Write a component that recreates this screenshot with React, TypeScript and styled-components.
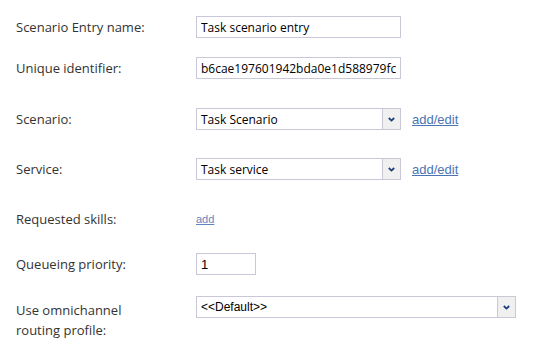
import styled, { createGlobalStyle } from "styled-components";

const GlobalStyle = createGlobalStyle`
    body {
        margin: 0;
        background: #fff;
        font-family: "Open Sans", "Noto Sans", sans-serif;
    }
`;

const Form = styled.div`
    padding: 16px 0 0 16px;
    width: 553px;
    height: 347px;
    box-sizing: border-box;
`;

const Row = styled.div<{ $top?: number; $start?: boolean }>`
    display: grid;
    grid-template-columns: 180px auto;
    align-items: ${(p) => (p.$start ? "start" : "center")};
    min-height: 22px;
    margin-top: ${(p) => p.$top ?? 0}px;
`;

const Label = styled.div<{ $pad?: number }>`
    font-size: 13px;
    line-height: 20px;
    color: #333;
    padding-top: ${(p) => p.$pad ?? 0}px;
`;

const Field = styled.div`
    display: flex;
    align-items: center;
    gap: 11px;
`;

const TextInput = styled.input<{ $w: number; $arial?: boolean }>`
    width: ${(p) => p.$w}px;
    height: 22px;
    box-sizing: border-box;
    border: 1px solid #c8c8d8;
    padding: 0 4px;
    margin: 0;
    font-family: ${(p) => (p.$arial ? '"Liberation Sans", Arial, sans-serif' : '"Open Sans", sans-serif')};
    font-size: ${(p) => (p.$arial ? 13 : 12)}px;
    color: #000;
    outline: none;
    background: #fff;
`;

const Select = styled.div<{ $w: number; $arial?: boolean }>`
    width: ${(p) => p.$w}px;
    height: 22px;
    box-sizing: border-box;
    border: 1px solid #c8c8d8;
    display: flex;
    align-items: center;
    background: #fff;
    font-family: ${(p) => (p.$arial ? '"Liberation Sans", Arial, sans-serif' : '"Open Sans", sans-serif')};
    font-size: 12px;
    color: #000;
`;

const SelectText = styled.span`
    flex: 1;
    padding-left: 4px;
    white-space: nowrap;
    overflow: hidden;
`;

const ArrowButton = styled.div`
    width: 17px;
    height: 100%;
    border-left: 1px solid #c8c8d8;
    background: #f0f0f0;
    display: flex;
    align-items: center;
    justify-content: center;
`;

const Link = styled.a<{ $size: number; $light?: boolean }>`
    font-family: "Liberation Sans", Arial, sans-serif;
    font-size: ${(p) => p.$size}px;
    color: ${(p) => (p.$light ? "#5f86c0" : "#4a74b3")};
    text-decoration: underline;
    cursor: pointer;
`;

function Chevron() {
    return (
        <svg width="7" height="5" viewBox="0 0 7 5">
            <path d="M0.8 1 L3.5 3.6 L6.2 1" fill="none" stroke="#1f3d7a" strokeWidth="1.8" />
        </svg>
    );
}

function Dropdown({ value, width, arial }: { value: string; width: number; arial?: boolean }) {
    return (
        <Select $w={width} $arial={arial}>
            <SelectText>{value}</SelectText>
            <ArrowButton>
                <Chevron />
            </ArrowButton>
        </Select>
    );
}

export default function App() {
    return (
        <>
            <GlobalStyle />
            <Form>
                <Row>
                    <Label>Scenario Entry name:</Label>
                    <Field>
                        <TextInput $w={205} value="Task scenario entry" readOnly />
                    </Field>
                </Row>
                <Row $top={19}>
                    <Label>Unique identifier:</Label>
                    <Field>
                        <TextInput $w={205} value="b6cae197601942bda0e1d588979fca4e" readOnly />
                    </Field>
                </Row>
                <Row $top={29}>
                    <Label>Scenario:</Label>
                    <Field>
                        <Dropdown value="Task Scenario" width={205} />
                        <Link $size={13}>add/edit</Link>
                    </Field>
                </Row>
                <Row $top={28}>
                    <Label>Service:</Label>
                    <Field>
                        <Dropdown value="Task service" width={205} />
                        <Link $size={13}>add/edit</Link>
                    </Field>
                </Row>
                <Row $top={28}>
                    <Label>Requested skills:</Label>
                    <Field>
                        <Link $size={11} $light>add</Link>
                    </Field>
                </Row>
                <Row $top={23}>
                    <Label>Queueing priority:</Label>
                    <Field>
                        <TextInput $w={60} $arial value="1" readOnly />
                    </Field>
                </Row>
                <Row $top={21} $start>
                    <Label $pad={4}>
                        Use omnichannel
                        <br />
                        routing profile:
                    </Label>
                    <Field>
                        <Dropdown value="<<Default>>" width={320} arial />
                    </Field>
                </Row>
            </Form>
        </>
    );
}
